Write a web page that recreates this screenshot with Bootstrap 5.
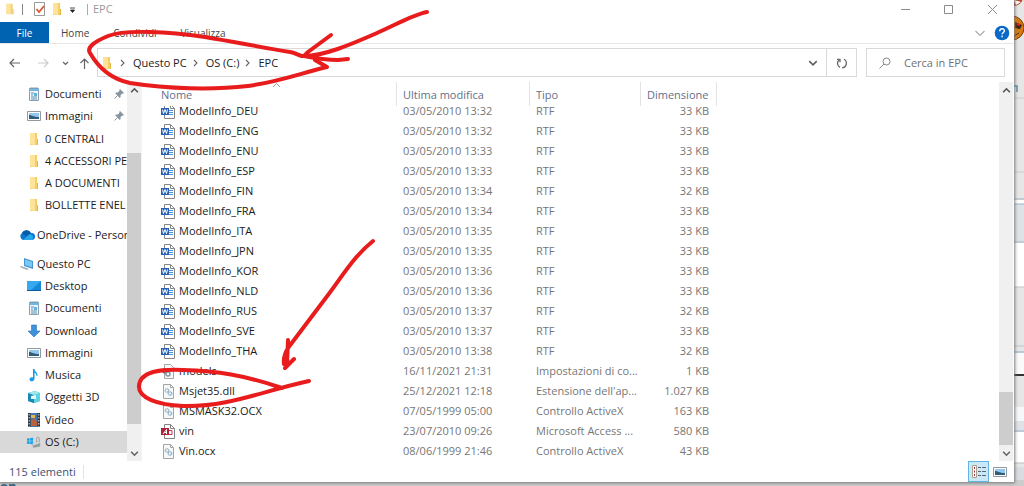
<!DOCTYPE html>
<html lang="it">
<head>
<meta charset="utf-8">
<meta name="viewport" content="width=device-width, initial-scale=1">
<title>EPC</title>
<link href="https://cdn.jsdelivr.net/npm/bootstrap@5.3.0/dist/css/bootstrap.min.css" rel="stylesheet">
<script src="https://cdn.jsdelivr.net/npm/bootstrap@5.3.0/dist/js/bootstrap.bundle.min.js"></script>
<style>
body{font-family:"Open Sans","Noto Sans",sans-serif;font-size:11px;line-height:20px;color:#1b1b1b;background:#e4e4e4;overflow:hidden}
a{color:inherit;text-decoration:none}
button{border:0;background:none;padding:0;color:inherit;line-height:inherit}
svg{display:block;flex:none}
.explorer{background:#fff;box-shadow:0 0 3px 1px #777;margin:0 10px 4px 0;z-index:1}
.titlebar{height:22px;color:#999;padding-bottom:4px}
.titlebar .tools{gap:4px;padding-left:4px}
.tabs{height:22px;border-bottom:1px solid #e6e6e6;color:#444;font-size:10px}
.file-tab{background:#0063b1;color:#fff;width:49px;height:21px}
.tab-list{gap:24px;margin-left:12px}
.addressbar{height:38px;padding:4px 9px 5px 6px}
.path-box,.find-box{height:29px;border:1px solid #d9d9d9}
.path-box{margin-left:6px;padding-left:2px}
.crumb-gap{margin:0 7px 0 6px}
.refresh{width:30px;height:27px;border-left:1px solid #d9d9d9;place-items:center}
.find-box{width:139px;margin-left:9px;padding-left:12px}
.find-box input{border:0;outline:0;padding:0;width:90px;margin-left:13px;color:#666;font-size:11px}
.find-box input::placeholder{color:#707070;opacity:1}
.side{width:127px;padding:1px 0 8px}
.side a{flex:1 1 22px;padding-left:27px;gap:4px;white-space:nowrap}
.side a.root{padding-left:19px;gap:2px}
.side a.on{background:#d9d9d9}
.side hr{height:7px;margin:0;border:0;opacity:0;flex:none}
.side .pinned .label{width:65px}
.scrollbar{width:14px;background:#f0f0f0}
.window-scroll{margin-right:1px}
.scrollbar button{height:16px;width:14px;display:grid;place-items:center}
.thumb{background:#cdcdcd;height:53px}
.side-scroll .gap-top{height:55px}
.side-scroll .gap-end{height:21px}
.files{border-left:1px solid #f4f4f4;padding-left:19px}
.files table{width:556px;table-layout:fixed;line-height:20px}
.files td,.files th{padding:0;font-weight:400;white-space:nowrap}
.files th{height:19px;line-height:19px;color:#5f6f8b;position:relative;z-index:1}
.files th::before{content:"";position:absolute;left:0;right:0;top:0;height:24px;background:#fff;z-index:-1}
.files th::after{content:"";position:absolute;right:0;top:0;width:1px;height:24px;background:#e3e3e3}
.files th span{position:relative;top:3px}
.files td{color:#767676}
.files td:first-child{color:#1b1b1b}
.files .later{padding-left:6px}
.files td:last-child{text-align:right;padding-right:8px}
.sorter{position:absolute;left:111px;top:0}
.status{height:21px;color:#3b4f74;padding:0 4px 0 9px}
.status .divide{width:1px;height:14px;background:#e2e2e2;margin-left:7px}
.status button{width:21px;height:21px;display:grid;place-items:center}
.status .active-view{background:#cce8f6;border:1px solid #5fb6e3}
.backdrop-right{position:absolute;right:0;top:0;width:12px;z-index:0}
.backdrop-foot{position:absolute;left:0;bottom:0;width:100%;height:6px;background:#ccc;overflow:hidden;z-index:0}
.backdrop-foot span{position:absolute;top:-4px;font-size:13px;font-weight:700;color:#2a5a80}
.ink{position:absolute;left:0;top:0;z-index:3;pointer-events:none}
</style>
</head>
<body class="position-relative min-vh-100">
<svg width="0" height="0" class="position-absolute">
<symbol id="folder" viewBox="0 0 14 14"><path d="M3 1h7v12H3z" fill="#f5cf66"/><path d="M3 1h4l1 1v11l-5-1z" fill="#ffe39a"/><path d="M10 7h1v6h-1z" fill="#e4b749"/></symbol>
<symbol id="document" viewBox="0 0 14 14"><path d="M2.500 1.500h9v12h-9z" fill="#eef6fb" stroke="#8ba0ae"/><path d="M2 1h10v3H2z" fill="#78b5d9"/><path d="M4 0v2M6 0v2M8 0v2M10 0v2" stroke="#68808e" stroke-width=".7"/><path d="M4 6h3M4 8h2M4 10h6M4 12h6" stroke="#5b91b4"/><path d="M7 6h3v3H7z" fill="#64afe0"/></symbol>
<symbol id="image" viewBox="0 0 14 14"><path d="M.5 2.500h13v9H.5z" fill="#fff" stroke="#8f999f"/><path d="M2 4h10v6H2z" fill="#92c8f0"/><path d="M2 6c3 0 4 2 10 2v2H2z" fill="#315d78"/></symbol>
<symbol id="cloud" viewBox="0 0 16 14"><path d="M4 12a4 4 0 0 1-1-7 5 5 0 0 1 9 0 3.500 3.500 0 0 1 1 7z" fill="#0d75cc"/><path d="M3 5a5 5 0 0 1 9 0L7 8z" fill="#075ba7"/><path d="M4 12l7-6a3.500 3.500 0 0 1 2 6z" fill="#28a8ea"/></symbol>
<symbol id="computer" viewBox="0 0 16 14"><path d="M5 1l9 3v8L5 9z" fill="#4596d1"/><path d="M6 2.500l7 2.300v5.500L6 8z" fill="#78caf5"/><path d="M2 9l8 3-2 1-7-3z" fill="#9aa8b3"/></symbol>
<symbol id="desktop" viewBox="0 0 14 14"><path d="M0 2h14v10H0z" fill="#1688d8"/><path d="M0 2h14L3 12H0z" fill="#36aaf0"/><path d="M0 11h14v1H0z" fill="#0a5aa0"/></symbol>
<symbol id="download" viewBox="0 0 14 14"><path d="M4.500 1h5v6H13l-6 6-6-6h3.500z" fill="#3e91db" stroke="#2c75bb" stroke-width=".6"/></symbol>
<symbol id="music" viewBox="0 0 14 14"><path d="M6 1h1.500c0 3 3.500 3 3 7h-1c0-2-1-3-2-3v6c-.5 3-5 3-5 .5C2.500 9.500 4.500 9 6 9.500z" fill="#159be9"/></symbol>
<symbol id="cube" viewBox="0 0 14 14"><path d="M1 3l7-2 5 2v8l-6 2-6-2z" fill="#24a5bf"/><path d="M1 3l6 2v8l-6-2z" fill="#1e88b0"/><path d="M7 5l6-2v8l-6 2z" fill="#5ed3e0"/><path d="M1 3l7-2 5 2-6 2z" fill="#a0e9ef"/><path d="M4 6l5-1v4H4z" fill="#e4fbfc"/></symbol>
<symbol id="film" viewBox="0 0 14 14"><path d="M1 0h12v14H1z" fill="#333"/><path d="M3.500 0h7v14h-7z" fill="#4478b5"/><path d="M4 8l3-3 3 4v4H4z" fill="#bb603c"/><path d="M4 2h4v3H4z" fill="#e4b650"/><path d="M2.200 1v13M11.800 1v13" stroke="#ddd" stroke-dasharray="1.500 1.500"/></symbol>
<symbol id="drive" viewBox="0 0 16 14"><path d="M0 3l3-.4v3H0zM3.600 2.500L7 2v3.600H3.600zM0 6.200h3v3L0 9zM3.600 6.200H7v3.600l-3.400-.5z" fill="#12a4e8"/><path d="M6 9l7-3 2 2v4l-8 1.500z" fill="#949ea3"/><path d="M6 9l7-3 2 2-8 3z" fill="#d2d9dc"/><path d="M11 7V3a1.500 1.500 0 0 1 3 0v4" stroke="#999" fill="none"/></symbol>
<symbol id="pin" viewBox="0 0 10 10"><path d="M6 0l4 4-1 .7-.8-.2L6.500 6.300l.1 1.700-.9.900L1.200 4.300l.9-.9 1.700.1L5.500 1.800 5.300.8z" fill="#8795a1"/><path d="M3.500 6.500L.5 9.500" stroke="#8795a1"/></symbol>
<symbol id="word" viewBox="0 0 14 15"><path d="M3.500.5h6l4 4v10h-10z" fill="#fff" stroke="#848484"/><path d="M9.500.5v4h4" fill="none" stroke="#848484"/><path d="M8 6.500h4M8 8.500h4M8 10.500h4" stroke="#4a94d8"/><path d="M0 4h8v7H0z" fill="#2860b6"/><path d="M1.500 5.500l1 4 1.500-4 1.500 4 1-4" fill="none" stroke="#fff"/></symbol>
<symbol id="access" viewBox="0 0 14 15"><path d="M3.500.5h6l4 4v10h-10z" fill="#fff" stroke="#848484"/><path d="M9.500.5v4h4" fill="none" stroke="#848484"/><path d="M8 6.500h3v4H8" fill="none" stroke="#b93b50"/><path d="M0 4h8v7H0z" fill="#ae2338"/><path d="M2 10l3.500-4.500V10M3 8.500h3" fill="none" stroke="#fff"/></symbol>
<symbol id="gears" viewBox="0 0 14 15"><path d="M2.500.5h7l3 3v11h-10z" fill="#f7f8f8" stroke="#a5a5a5"/><path d="M9.500.5v3h3" fill="none" stroke="#a5a5a5"/><circle cx="6" cy="6.500" r="1.700" fill="none" stroke="#91a9b5" stroke-width="1.300" stroke-dasharray="1 .4"/><circle cx="9" cy="9.500" r="1.700" fill="none" stroke="#72acc8" stroke-width="1.300" stroke-dasharray="1 .4"/></symbol>
<symbol id="config" viewBox="0 0 14 15"><path d="M3.500.5h6l3 3v11h-9z" fill="#f7f8f8" stroke="#a5a5a5"/><circle cx="4" cy="7" r="2" fill="none" stroke="#777" stroke-width="1.500"/><circle cx="7" cy="10" r="2" fill="none" stroke="#8298a5" stroke-width="1.500"/></symbol>
<symbol id="up" viewBox="0 0 8 8"><path d="M1 5.500l3-3 3 3" fill="none" stroke="#505050" stroke-width="1.400"/></symbol>
<symbol id="down" viewBox="0 0 8 8"><path d="M1 2.500l3 3 3-3" fill="none" stroke="#606060" stroke-width="1.300"/></symbol>
<symbol id="next" viewBox="0 0 6 8"><path d="M1 1l3 3-3 3" fill="none" stroke="#666" stroke-width="1.100"/></symbol>
</svg>

<!-- page visible behind the window -->
<svg class="backdrop-right" width="12" height="486" viewBox="0 0 12 486">
<path d="M0 0h12v486H0z" fill="#e6e6e6"/>
<circle cx="2" cy="-3" r="9" fill="#b54b2b"/><path d="M2 0l7 2-5 3z" fill="#fff"/>
<circle cx="0" cy="28" r="12" fill="#d57a13" stroke="#713c13"/><path d="M3 22l7 3-2 4-5-1z" fill="#402015"/><path d="M5 24l3 1" stroke="#e22" stroke-width="2"/><path d="M2 36l5-3" stroke="#522a10"/>
<path d="M2 86h3v6" fill="none" stroke="#4d8fb8" stroke-width="1.500"/>
<path d="M0 98h12M0 172h12" stroke="#ccc"/><path d="M0 199h12" stroke="#9fb0bb"/><path d="M0 200h12v4H0z" fill="#fff"/><path d="M0 204h12v38H0z" fill="#dde2e7"/><path d="M0 204h12M0 242h12" stroke="#9fb3c4"/><path d="M0 243h12v44H0z" fill="#fff"/><path d="M0 287h12M0 346h12" stroke="#bfc4c8"/><path d="M0 352h12" stroke="#8dabc0"/><path d="M0 353h12v21H0z" fill="#fafafa"/><path d="M0 375h12" stroke="#333" stroke-width="2"/><path d="M0 407h12v14H0z" fill="#f5f7f9"/><path d="M0 421h12v11H0z" fill="#dfe3e8"/><path d="M0 431h12" stroke="#9fb3c4"/><path d="M0 432h12v31H0z" fill="#fff"/><path d="M0 463h12" stroke="#bbb"/><path d="M0 467h12v19H0z" fill="#d9dde1"/>
</svg>
<div class="backdrop-foot"><span>on</span></div>

<div class="explorer position-relative d-flex flex-column">
<header class="titlebar d-flex align-items-center justify-content-between">
<div class="tools d-flex align-items-center">
<svg width="12" height="14"><use href="#folder"/></svg>
<svg width="9" height="14" viewBox="0 0 9 14"><path d="M2.500 2v11" stroke="#888"/></svg>
<svg width="13" height="14" viewBox="0 0 13 14"><path d="M1.500.5h10v13h-10z" fill="#fff" stroke="#999"/><path d="M3.500 7l2.500 3 5-6" stroke="#e0592f" stroke-width="1.800" fill="none"/></svg>
<svg width="14" height="14"><use href="#folder"/></svg>
<svg width="10" height="14" viewBox="0 0 10 14"><path d="M2 6h5M2.500 8h4L4.500 10.500z" stroke="#222" fill="#222" stroke-width=".8"/></svg>
<svg width="7" height="14" viewBox="0 0 7 14"><path d="M5.500 2v11" stroke="#aaa"/></svg>
<span>EPC</span>
</div>
<svg class="me-3" width="98" height="12" viewBox="0 0 98 12" fill="none" stroke="#8b8b8b"><path d="M1 6.500h9M44.500 2.500h8v8h-8zM88 2l9 9M97 2l-9 9"/></svg>
</header>
<nav class="tabs d-flex align-items-center">
<button class="file-tab">File</button>
<div class="tab-list d-flex"><button>Home</button><button>Condividi</button><button>Visualizza</button></div>
<svg class="ms-auto" width="12" height="10" viewBox="0 0 12 10"><path d="M1.500 3L6 7.500 10.500 3" fill="none" stroke="#aaa" stroke-width="1.200"/></svg>
<svg class="ms-2" width="16" height="16" viewBox="0 0 16 16"><circle cx="8" cy="8" r="7.300" fill="#0b69c7"/><path d="M5.700 6.300c0-3.500 4.700-3.300 4.700-.5 0 1.700-2.300 1.600-2.300 3.500M8.100 10.500v1.700" fill="none" stroke="#fff" stroke-width="1.400"/></svg>
<span class="pe-1"></span>
</nav>
<div class="addressbar d-flex align-items-center">
<svg width="85" height="14" viewBox="0 0 85 14" fill="none" stroke="#666" stroke-width="1.200"><path d="M14 7H4M8 3L4 7l4 4"/><path d="M32 7h10M38 3l4 4-4 4" stroke="#ccc"/><path d="M57 6l2.500 2.500L62 6M78.500 13V3M74.500 7l4-4 4 4"/></svg>
<div class="path-box d-flex align-items-center flex-grow-1">
<svg width="14" height="14"><use href="#folder"/></svg>
<svg class="crumb-gap" width="6" height="8"><use href="#next"/></svg><a href="#">Questo PC</a>
<svg class="crumb-gap" width="6" height="8"><use href="#next"/></svg><a href="#">OS (C:)</a>
<svg class="crumb-gap" width="6" height="8"><use href="#next"/></svg><a href="#">EPC</a>
<svg class="ms-auto me-2" width="10" height="10"><use href="#down"/></svg>
<button class="refresh d-grid" aria-label="Aggiorna"><svg width="12" height="12" viewBox="0 0 12 12" fill="none" stroke="#6a6a6a" stroke-width="1.300"><path d="M4 10.300A4.500 4.500 0 0 1 3 3M1 2.300h3v3M6 10.800A4.600 4.600 0 0 0 8 2.200"/></svg></button>
</div>
<label class="find-box d-flex align-items-center"><svg width="12" height="12" viewBox="0 0 12 12" fill="none" stroke="#888"><circle cx="7.500" cy="4.500" r="3.500"/><path d="M5 7L.5 11.500"/></svg><input type="text" placeholder="Cerca in EPC" aria-label="Cerca"></label>
</div>
<main class="d-flex">
<nav class="side d-flex flex-column" id="side"></nav>
<div class="scrollbar side-scroll d-flex flex-column"><button aria-label="Su"><svg width="9" height="9"><use href="#up"/></svg></button><div class="gap-top"></div><div class="thumb flex-grow-1"></div><div class="gap-end"></div><button aria-label="Giù"><svg width="9" height="9"><use href="#down"/></svg></button></div>
<section class="files flex-grow-1"><table>
<colgroup><col style="width:236px"><col style="width:133px"><col style="width:111px"><col></colgroup>
<thead><tr><th scope="col"><span>Nome</span><svg class="sorter" width="9" height="6" viewBox="0 0 9 6"><path d="M1 5l3.500-3.500L8 5" fill="none" stroke="#999"/></svg></th><th scope="col" class="later"><span>Ultima modifica</span></th><th scope="col" class="later"><span>Tipo</span></th><th scope="col" class="later"><span>Dimensione</span></th></tr></thead>
<tbody id="rows"></tbody></table></section>
<div class="scrollbar window-scroll d-flex flex-column"><button aria-label="Su"><svg width="9" height="9"><use href="#up"/></svg></button><div class="flex-grow-1"></div><div class="thumb"></div><button aria-label="Giù"><svg width="9" height="9"><use href="#down"/></svg></button></div>
</main>
<footer class="status d-flex align-items-center"><span>115 elementi</span><span class="divide"></span>
<button class="active-view ms-auto" aria-label="Dettagli"><svg width="14" height="13" viewBox="0 0 14 13"><path d="M.5.500h4v12h-4z" fill="#fff" stroke="#a89f90"/><path d="M2 3h1M2 6.500h1M2 10h1" stroke="#a33" stroke-width="2"/><path d="M6 2.500h3M10 2.500h4M6 6.500h3M10 6.500h4M6 10.500h3M10 10.500h4" stroke="#567"/></svg></button>
<button aria-label="Icone grandi"><svg width="14" height="14"><use href="#image"/></svg></button>
</footer>
</div>

<!-- freehand red marks -->
<svg class="ink" width="1024" height="486" viewBox="0 0 1024 486" fill="none" stroke="#e81c1c" stroke-width="4" stroke-linecap="round" stroke-linejoin="round">
<path d="M302 56c-5-1-6-3-12-4-30-5-55-10-85-15-35-5-80-8-97-1-12 5-22 11-18 17 8 14 21 26 40 30 38 6 83 7 118 3 30-4 50-12 79-19l-12-7"/>
<path d="M427 12c-12 2-30 12-50 21-25 11-55 24-75 23M331 35l-23 17-4 4c10 2 27 4 34 4l10-1"/>
<path d="M373 241c-20 16-31 36-48 58l-37 49c-3 5-5 9-4 16M288 340l-1 25-2 3 9-9M286 352l-2 12"/>
<path d="M282 388c-38-13-65-17-99-18-22-1-43 1-44 16-1 12 19 19 44 20 45 1 76-14 126-25"/>
</svg>
<script>
const icon=(id,w,h)=>`<svg width="${w}" height="${h}"><use href="#${id}"/></svg>`;
const side=[["document","Documenti","pinned"],["image","Immagini","pinned"],["folder","0 CENTRALI"],["folder","4 ACCESSORI PE"],["folder","A DOCUMENTI"],["folder","BOLLETTE ENEL"],0,["cloud","OneDrive - Person","root"],0,["computer","Questo PC","root"],["desktop","Desktop"],["document","Documenti"],["download","Download"],["image","Immagini"],["music","Musica"],["cube","Oggetti 3D"],["film","Video"],["drive","OS (C:)","on"]];
document.getElementById("side").innerHTML=side.map(s=>s?`<a href="#" class="d-flex align-items-center ${s[2]||""}">${icon(s[0],s[2]==="root"?16:14,14)}<span class="label">${s[1]}</span>${s[2]==="pinned"?icon("pin",10,10):""}</a>`:"<hr>").join("");
const rows=[["DEU",32,33],["ENG",32,33],["ENU",33,33],["ESP",33,33],["FIN",34,32],["FRA",34,33],["ITA",35,33],["JPN",35,33],["KOR",36,33],["NLD",36,33],["RUS",37,32],["SVE",37,33],["THA",38,32]].map(r=>["word","ModelInfo_"+r[0],"03/05/2010 13:"+r[1],"RTF",r[2]]);
rows.push(["config","models","16/11/2021 21:31","Impostazioni di co...","1"],["gears","Msjet35.dll","25/12/2021 12:18","Estensione dell'ap...","1.027"],["gears","MSMASK32.OCX","07/05/1999 05:00","Controllo ActiveX","163"],["access","vin","23/07/2010 09:26","Microsoft Access ...","580"],["gears","Vin.ocx","08/06/1999 21:46","Controllo ActiveX","43"]);
document.getElementById("rows").innerHTML=rows.map(r=>`<tr><td><div class="d-flex align-items-center gap-1">${icon(r[0],14,15)}<span>${r[1]}</span></div></td><td class="later">${r[2]}</td><td class="later">${r[3]}</td><td>${r[4]} KB</td></tr>`).join("");
</script>
</body>
</html>
